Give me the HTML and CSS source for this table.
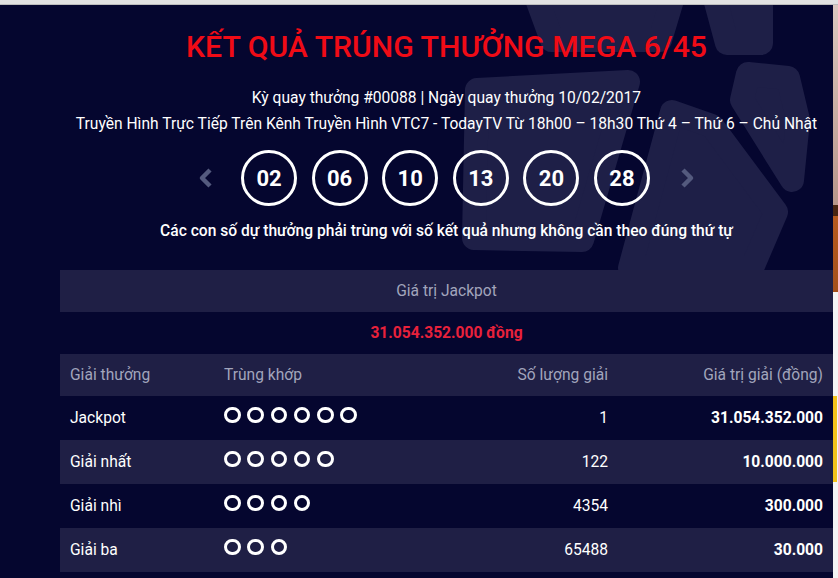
FILE: index.html
```html
<!DOCTYPE html>
<html lang="vi">
<head>
<meta charset="utf-8">
<title>Kết quả Mega 6/45</title>
<link rel="stylesheet" href="styles.css">
</head>
<body>
<div class="topbar"></div>
<div class="page">
  <main class="panel">
    <svg class="bg-logo" width="833" height="573" viewBox="0 5 833 573" aria-hidden="true">
      <g fill="#1e1f47" stroke="#1e1f47" stroke-width="24" stroke-linejoin="round">
        <polygon points="530,-20 678,-20 660,40 552,40"/>
        <polygon points="710,-20 761,-20 761,43 727,43"/>
        <polygon points="477,90 628,82 582,240 474,238"/>
        <polygon points="672,112 712,126 776,212 752,268 630,268"/>
        <polygon points="748,74 788,78 798,120 792,180 742,100"/>
      </g>
    </svg>
    <div class="content">
      <h1 class="title">KẾT QUẢ TRÚNG THƯỞNG MEGA 6/45</h1>
      <p class="meta meta-first">Kỳ quay thưởng #00088 | Ngày quay thưởng 10/02/2017</p>
      <p class="meta">Truyền Hình Trực Tiếp Trên Kênh Truyền Hình VTC7 - TodayTV Từ 18h00 – 18h30 Thứ 4 – Thứ 6 – Chủ Nhật</p>
      <div class="balls">
        <svg class="arrow arrow-left" width="15" height="24" viewBox="0 0 15 24"><path d="M12 4 L4 12 L12 20" fill="none" stroke="#545a7e" stroke-width="4.5" stroke-linejoin="round"/></svg>
        <span class="ball">02</span>
        <span class="ball">06</span>
        <span class="ball">10</span>
        <span class="ball">13</span>
        <span class="ball">20</span>
        <span class="ball">28</span>
        <svg class="arrow arrow-right" width="15" height="24" viewBox="0 0 15 24"><path d="M3 4 L11 12 L3 20" fill="none" stroke="#545a7e" stroke-width="4.5" stroke-linejoin="round"/></svg>
      </div>
      <p class="note">Các con số dự thưởng phải trùng với số kết quả nhưng không cần theo đúng thứ tự</p>
    </div>
    <div class="table">
      <div class="band band-light">Giá trị Jackpot</div>
      <div class="band jackpot-value">31.054.352.000 đồng</div>
      <div class="row head">
        <div class="cell">Giải thưởng</div>
        <div class="cell">Trùng khớp</div>
        <div class="cell right">Số lượng giải</div>
        <div class="cell right">Giá trị giải (đồng)</div>
      </div>
      <div class="row">
        <div class="cell">Jackpot</div>
        <div class="cell"><div class="dots"><i class="dot"></i><i class="dot"></i><i class="dot"></i><i class="dot"></i><i class="dot"></i><i class="dot"></i></div></div>
        <div class="cell right num">1</div>
        <div class="cell right val">31.054.352.000</div>
      </div>
      <div class="row alt">
        <div class="cell">Giải nhất</div>
        <div class="cell"><div class="dots"><i class="dot"></i><i class="dot"></i><i class="dot"></i><i class="dot"></i><i class="dot"></i></div></div>
        <div class="cell right num">122</div>
        <div class="cell right val">10.000.000</div>
      </div>
      <div class="row">
        <div class="cell">Giải nhì</div>
        <div class="cell"><div class="dots"><i class="dot"></i><i class="dot"></i><i class="dot"></i><i class="dot"></i></div></div>
        <div class="cell right num">4354</div>
        <div class="cell right val">300.000</div>
      </div>
      <div class="row alt">
        <div class="cell">Giải ba</div>
        <div class="cell"><div class="dots"><i class="dot"></i><i class="dot"></i><i class="dot"></i></div></div>
        <div class="cell right num">65488</div>
        <div class="cell right val">30.000</div>
      </div>
    </div>
  </main>
  <aside class="edge">
    <div class="edge-beige"></div>
    <div class="edge-brown"></div>
    <div class="edge-orange"></div>
    <div class="edge-white"></div>
    <div class="edge-yellow"></div>
  </aside>
</div>
</body>
</html>
```

FILE: styles.css
```css
html, body {
  margin: 0;
  padding: 0;
}
body {
  width: 838px;
  height: 578px;
  overflow: hidden;
  background: #f4f4f4;
  font-family: Roboto, "Noto Sans", "Liberation Sans", sans-serif;
}
.topbar {
  height: 4px;
  background: #e2e2e2;
  border-bottom: 1px solid #bdbdbd;
}
.page {
  display: flex;
  height: 573px;
}
.panel {
  position: relative;
  width: 833px;
  flex: none;
  background: #05062f;
  padding-top: 25px;
  box-sizing: border-box;
  overflow: hidden;
}
.bg-logo {
  position: absolute;
  left: 0;
  top: 0;
  z-index: 0;
}
.content,
.table {
  position: relative;
  z-index: 1;
  margin-left: 60px;
}
.content {
  text-align: center;
  color: #fff;
}
.title {
  margin: 0;
  font-size: 30.2px;
  line-height: 34px;
  font-weight: 500;
  color: #f00b16;
}
.meta {
  margin: 0;
  font-size: 15.6px;
  line-height: 26px;
}
.meta-first {
  margin-top: 21px;
}
.balls {
  display: flex;
  justify-content: center;
  align-items: center;
  gap: 14.6px;
  height: 56px;
  margin-top: 13px;
}
.arrow {
  flex: none;
}
.arrow-left {
  margin-right: 13.5px;
}
.arrow-right {
  margin-left: 15.5px;
}
.ball {
  width: 56px;
  height: 56px;
  box-sizing: border-box;
  border: 3px solid #fff;
  border-radius: 50%;
  display: flex;
  align-items: center;
  justify-content: center;
  font-size: 22px;
  font-weight: 700;
  color: #fff;
}
.note {
  margin: 15px 0 0;
  font-size: 15.6px;
  line-height: 20px;
  font-weight: 500;
}
.table {
  margin-top: 29px;
  font-size: 15.6px;
}
.band {
  height: 42px;
  display: flex;
  align-items: center;
  justify-content: center;
}
.band-light {
  background: #1f1f45;
  color: #a2a5bc;
}
.jackpot-value {
  color: #e8213b;
  font-weight: 700;
}
.row {
  display: grid;
  grid-template-columns: 154px 204px 200px 1fr;
  height: 44px;
  align-items: center;
  color: #fff;
}
.row.head {
  height: 42px;
  background: #1f1f45;
  color: #a2a5bc;
}
.row.alt {
  background: #1f1f45;
}
.cell {
  padding: 0 10px;
}
.right {
  text-align: right;
}
.num {
  font-weight: 400;
}
.val {
  font-weight: 700;
}
.dots {
  display: flex;
  gap: 6.8px;
  margin-bottom: 6px;
}
.dot {
  display: block;
  width: 16.5px;
  height: 16.5px;
  box-sizing: border-box;
  border: 3px solid #fff;
  border-radius: 50%;
}
.edge {
  width: 5px;
  flex: none;
  display: flex;
  flex-direction: column;
}
.edge-beige {
  height: 200px;
  background: linear-gradient(#dcc8c0, #b9968a);
}
.edge-brown {
  height: 11px;
  background: #4a2410;
}
.edge-orange {
  height: 76px;
  background: linear-gradient(#b85a1e, #a4501b);
}
.edge-white {
  height: 104px;
  background: #f4f4f4;
}
.edge-yellow {
  height: 86px;
  width: 4px;
  background: #f3c21b;
}
```
